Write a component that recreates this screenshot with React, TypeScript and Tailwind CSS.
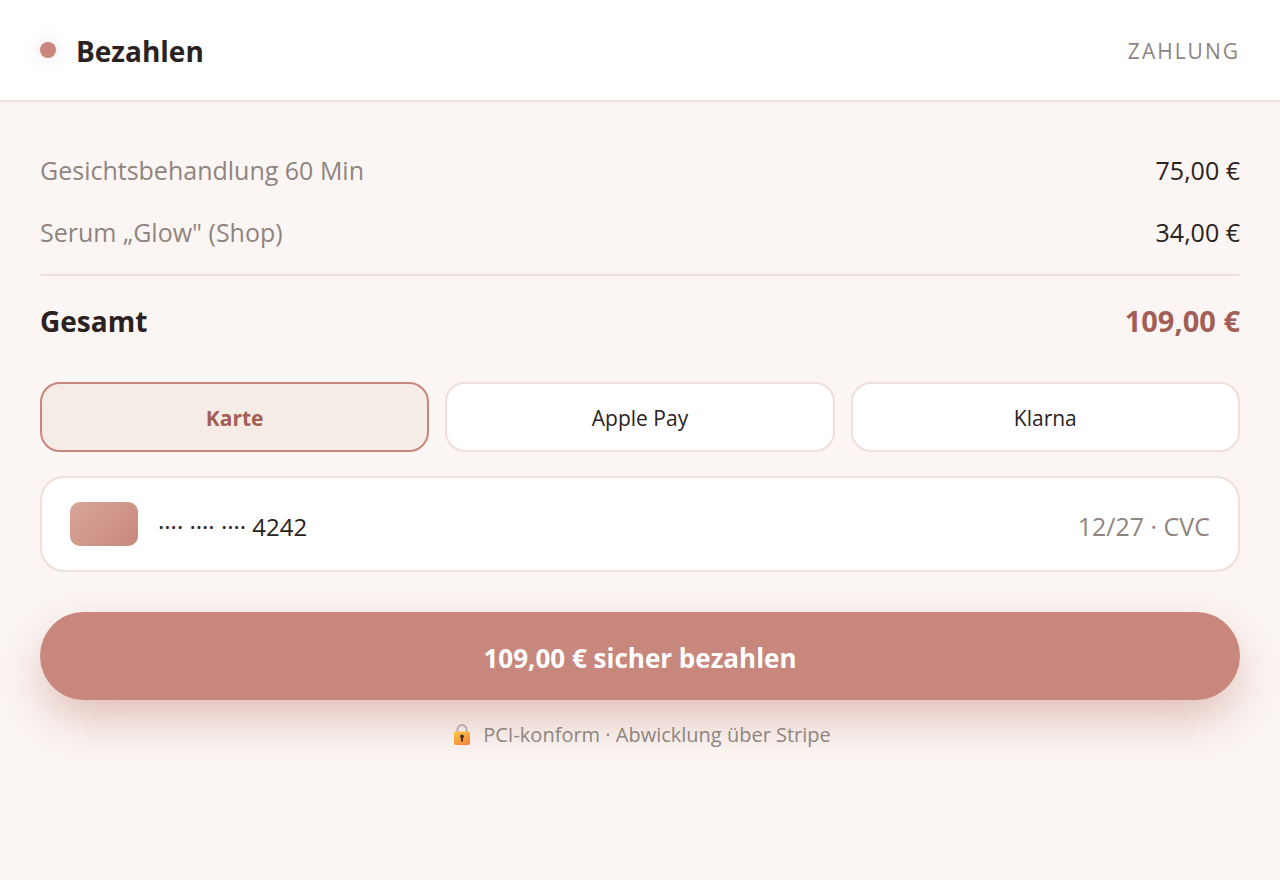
import { useState } from 'react';
import clsx from 'clsx';

interface LineItem {
  label: string;
  price: string;
}

const items: LineItem[] = [
  { label: 'Gesichtsbehandlung 60 Min', price: '75,00 €' },
  { label: 'Serum „Glow" (Shop)', price: '34,00 €' },
];

const methods = ['Karte', 'Apple Pay', 'Klarna'];

function LockIcon() {
  return (
    <svg width="18" height="22" viewBox="0 0 18 22" aria-hidden="true">
      <defs>
        <linearGradient id="lockBody" x1="0" y1="0" x2="0.6" y2="1">
          <stop offset="0" stopColor="#fcc846" />
          <stop offset="1" stopColor="#f48a3c" />
        </linearGradient>
      </defs>
      <path d="M4.5 10V5.6a4.5 4.5 0 0 1 9 0V10" fill="none" stroke="#b3a9b3" strokeWidth="2" />
      <rect x="1" y="7.5" width="16" height="13.5" rx="1.8" fill="url(#lockBody)" />
      <circle cx="9" cy="12.4" r="2" fill="#4a2f2a" />
      <path d="M8 13h2v4.4H8z" fill="#4a2f2a" />
    </svg>
  );
}

export default function App() {
  const [method, setMethod] = useState('Karte');
  const [cardNumber, setCardNumber] = useState('···· ···· ···· 4242');
  const [expiry, setExpiry] = useState('12/27 · CVC');

  return (
    <div className="min-h-screen bg-[#fbf6f3] font-['Open_Sans','Noto_Sans',sans-serif] text-[#2a2220]">
      <header className="flex items-center justify-between border-b-2 border-[#eedfda] bg-white px-10 py-7">
        <div className="flex items-center gap-5">
          <span className="size-4 rounded-full bg-[#c8877d] shadow-[0_0_16px_rgba(200,135,125,0.3)]" />
          <h1 className="pt-0.5 text-[28px] leading-[42px] font-bold">Bezahlen</h1>
        </div>
        <span className="pt-1 text-[21px] tracking-[2px] text-[#8f847f] uppercase">Zahlung</span>
      </header>

      <main className="px-10 pt-[38px] pb-10">
        <dl>
          {items.map((item) => (
            <div key={item.label} className="flex items-center justify-between pt-[11px] pb-[13px] text-[25px] leading-[38px]">
              <dt className="text-[#8f847f]">{item.label}</dt>
              <dd>{item.price}</dd>
            </div>
          ))}
          <div className="mt-2.5 flex items-center justify-between border-t-2 border-[#eedfda] py-[23px] text-[28px] leading-11 font-bold">
            <dt>Gesamt</dt>
            <dd className="text-[29px] text-[#a35f57]">109,00 €</dd>
          </div>
        </dl>

        <div className="mt-4 flex gap-4">
          {methods.map((name) => (
            <button
              key={name}
              type="button"
              aria-pressed={method === name}
              onClick={() => setMethod(name)}
              className={clsx(
                'flex-1 rounded-[20px] border-2 pt-[17px] pb-[15px] text-[21px] leading-[34px]',
                method === name
                  ? 'border-[#c8877d] bg-[#f5ece6] font-bold text-[#a35f57]'
                  : 'border-[#eedfda] bg-white'
              )}
            >
              {name}
            </button>
          ))}
        </div>

        <div className="mt-6 flex items-center gap-5 rounded-3xl border-2 border-[#eedfda] bg-white px-7 py-6 text-[24px]">
          <span className="h-11 w-[68px] shrink-0 rounded-[10px] bg-linear-135 from-[#d9a59a] to-[#c8877d]" />
          <input
            type="text"
            aria-label="Kartennummer"
            value={cardNumber}
            onChange={(e) => setCardNumber(e.target.value)}
            className="h-11 min-w-0 flex-1 pt-1 outline-none"
          />
          <input
            type="text"
            aria-label="Ablaufdatum und CVC"
            value={expiry}
            onChange={(e) => setExpiry(e.target.value)}
            className="h-11 w-48 min-w-0 pt-1 text-right text-[25px] text-[#8f847f] outline-none"
          />
        </div>

        <button
          type="button"
          className="mt-10 w-full rounded-full bg-[#c8877d] pt-[26px] pb-[22px] text-[26px] leading-10 font-bold text-white shadow-[0_20px_48px_-4px_rgba(200,135,125,0.55)]"
        >
          109,00 € sicher bezahlen
        </button>

        <p className="mt-5 flex items-center justify-center gap-3 pl-1 text-[20px] leading-[30px] text-[#8f847f]">
          <LockIcon />
          PCI-konform · Abwicklung über Stripe
        </p>
      </main>
    </div>
  );
}
